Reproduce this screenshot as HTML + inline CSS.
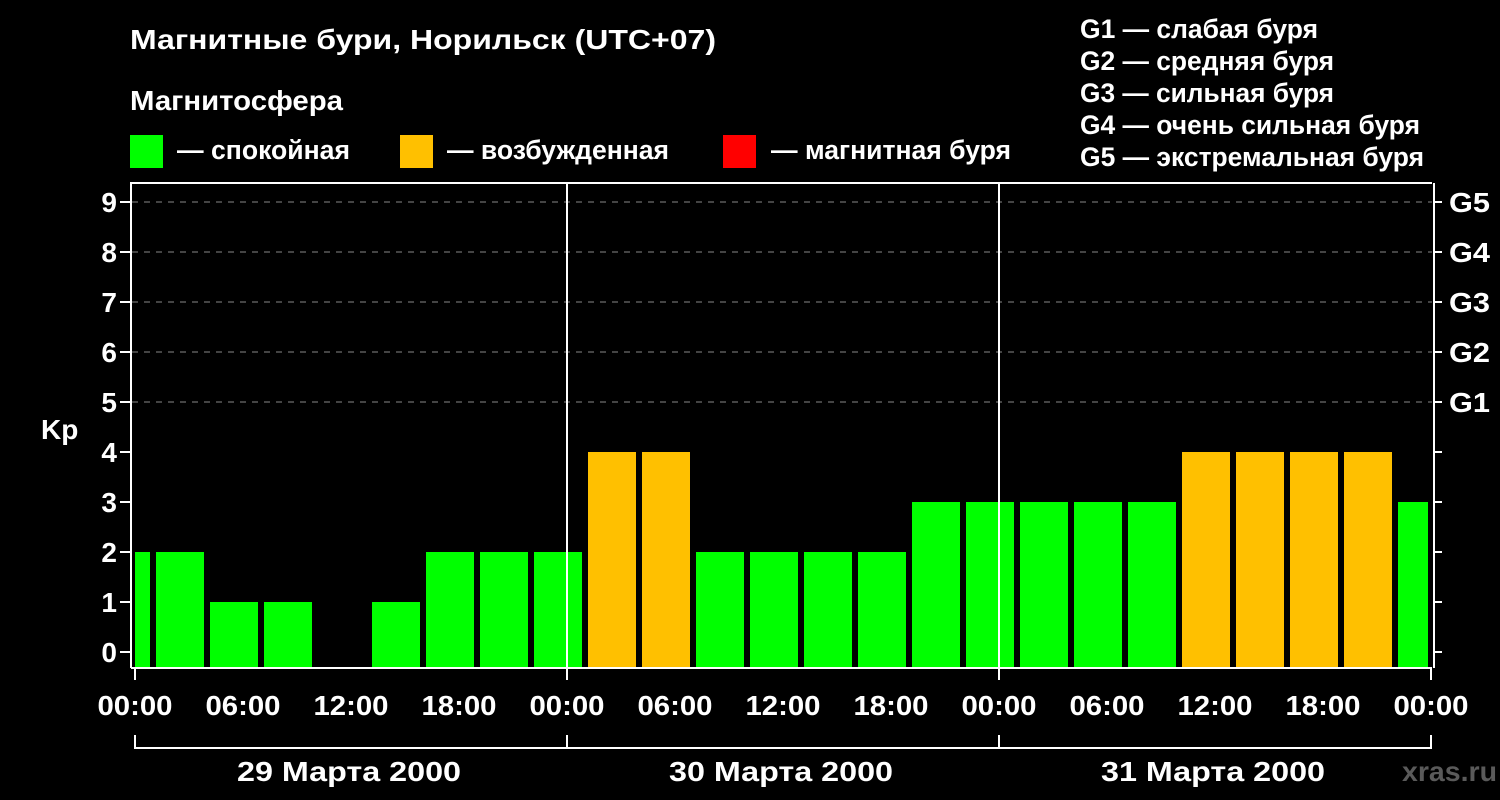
<!DOCTYPE html>
<html><head><meta charset="utf-8"><style>body{margin:0;background:#000}svg{display:block}text{font-family:"Liberation Sans",sans-serif;font-weight:bold;fill:#fff}</style></head><body>
<svg width="1500" height="800" xmlns="http://www.w3.org/2000/svg">
<rect width="1500" height="800" fill="#000"/>
<g font-size="28">
<text x="130" y="49" textLength="586" lengthAdjust="spacingAndGlyphs">Магнитные бури, Норильск (UTC+07)</text>
<text x="130" y="110" textLength="213" lengthAdjust="spacingAndGlyphs">Магнитосфера</text>
</g>
<rect x="130" y="135" width="33" height="33" fill="#00ff00"/>
<rect x="400" y="135" width="33" height="33" fill="#ffc000"/>
<rect x="723" y="135" width="33" height="33" fill="#ff0000"/>
<g font-size="27">
<text x="177" y="159" textLength="173" lengthAdjust="spacingAndGlyphs">— спокойная</text>
<text x="447" y="159" textLength="222" lengthAdjust="spacingAndGlyphs">— возбужденная</text>
<text x="771" y="159" textLength="240" lengthAdjust="spacingAndGlyphs">— магнитная буря</text>
<text x="1080" y="38" textLength="238" lengthAdjust="spacingAndGlyphs">G1 — слабая буря</text>
<text x="1080" y="70" textLength="254" lengthAdjust="spacingAndGlyphs">G2 — средняя буря</text>
<text x="1080" y="102" textLength="254" lengthAdjust="spacingAndGlyphs">G3 — сильная буря</text>
<text x="1080" y="134" textLength="340" lengthAdjust="spacingAndGlyphs">G4 — очень сильная буря</text>
<text x="1080" y="166" textLength="344" lengthAdjust="spacingAndGlyphs">G5 — экстремальная буря</text>
</g>
<g stroke="#888" stroke-width="1" stroke-dasharray="6,6">
<line x1="132" y1="202" x2="1432" y2="202"/><line x1="132" y1="252" x2="1432" y2="252"/><line x1="132" y1="302" x2="1432" y2="302"/><line x1="132" y1="352" x2="1432" y2="352"/><line x1="132" y1="402" x2="1432" y2="402"/>
</g>
<g>
<rect x="135" y="552" width="15" height="116" fill="#00ff00"/>
<rect x="156" y="552" width="48" height="116" fill="#00ff00"/>
<rect x="210" y="602" width="48" height="66" fill="#00ff00"/>
<rect x="264" y="602" width="48" height="66" fill="#00ff00"/>
<rect x="372" y="602" width="48" height="66" fill="#00ff00"/>
<rect x="426" y="552" width="48" height="116" fill="#00ff00"/>
<rect x="480" y="552" width="48" height="116" fill="#00ff00"/>
<rect x="534" y="552" width="48" height="116" fill="#00ff00"/>
<rect x="588" y="452" width="48" height="216" fill="#ffc000"/>
<rect x="642" y="452" width="48" height="216" fill="#ffc000"/>
<rect x="696" y="552" width="48" height="116" fill="#00ff00"/>
<rect x="750" y="552" width="48" height="116" fill="#00ff00"/>
<rect x="804" y="552" width="48" height="116" fill="#00ff00"/>
<rect x="858" y="552" width="48" height="116" fill="#00ff00"/>
<rect x="912" y="502" width="48" height="166" fill="#00ff00"/>
<rect x="966" y="502" width="48" height="166" fill="#00ff00"/>
<rect x="1020" y="502" width="48" height="166" fill="#00ff00"/>
<rect x="1074" y="502" width="48" height="166" fill="#00ff00"/>
<rect x="1128" y="502" width="48" height="166" fill="#00ff00"/>
<rect x="1182" y="452" width="48" height="216" fill="#ffc000"/>
<rect x="1236" y="452" width="48" height="216" fill="#ffc000"/>
<rect x="1290" y="452" width="48" height="216" fill="#ffc000"/>
<rect x="1344" y="452" width="48" height="216" fill="#ffc000"/>
<rect x="1398" y="502" width="30" height="166" fill="#00ff00"/>
</g>
<g stroke="#fff" stroke-width="2" fill="none">
<path d="M131 668 V183 H1432 M131 668 H1431 V680"/>
<line x1="1434" y1="183" x2="1434" y2="668"/>
<line x1="567" y1="183" x2="567" y2="680"/>
<line x1="999" y1="183" x2="999" y2="680"/>
<line x1="135" y1="668" x2="135" y2="680"/>
<path d="M135 735 V748 H1431 V735 M567 735 V748 M999 735 V748"/>
<path d="M120 202H131M120 252H131M120 302H131M120 352H131M120 402H131M120 452H131M120 502H131M120 552H131M120 602H131M120 652H131"/>
<path d="M1434 202H1442M1434 252H1442M1434 302H1442M1434 352H1442M1434 402H1442M1434 452H1442M1434 502H1442M1434 552H1442M1434 602H1442M1434 652H1442"/>
</g>
<g font-size="28" text-anchor="end">
<text x="117" y="212">9</text><text x="117" y="262">8</text><text x="117" y="312">7</text><text x="117" y="362">6</text><text x="117" y="412">5</text><text x="117" y="462">4</text><text x="117" y="512">3</text><text x="117" y="562">2</text><text x="117" y="612">1</text><text x="117" y="662">0</text>
</g>
<g font-size="28">
<text x="1449" y="212" textLength="41" lengthAdjust="spacingAndGlyphs">G5</text><text x="1449" y="262" textLength="41" lengthAdjust="spacingAndGlyphs">G4</text><text x="1449" y="312" textLength="41" lengthAdjust="spacingAndGlyphs">G3</text><text x="1449" y="362" textLength="41" lengthAdjust="spacingAndGlyphs">G2</text><text x="1449" y="412" textLength="41" lengthAdjust="spacingAndGlyphs">G1</text>
</g>
<text x="41" y="439" font-size="28">Kp</text>
<g font-size="28" text-anchor="middle">
<text x="135" y="715" textLength="75" lengthAdjust="spacingAndGlyphs">00:00</text><text x="243" y="715" textLength="75" lengthAdjust="spacingAndGlyphs">06:00</text><text x="351" y="715" textLength="75" lengthAdjust="spacingAndGlyphs">12:00</text><text x="459" y="715" textLength="75" lengthAdjust="spacingAndGlyphs">18:00</text>
<text x="567" y="715" textLength="75" lengthAdjust="spacingAndGlyphs">00:00</text><text x="675" y="715" textLength="75" lengthAdjust="spacingAndGlyphs">06:00</text><text x="783" y="715" textLength="75" lengthAdjust="spacingAndGlyphs">12:00</text><text x="891" y="715" textLength="75" lengthAdjust="spacingAndGlyphs">18:00</text>
<text x="999" y="715" textLength="75" lengthAdjust="spacingAndGlyphs">00:00</text><text x="1107" y="715" textLength="75" lengthAdjust="spacingAndGlyphs">06:00</text><text x="1215" y="715" textLength="75" lengthAdjust="spacingAndGlyphs">12:00</text><text x="1323" y="715" textLength="75" lengthAdjust="spacingAndGlyphs">18:00</text>
<text x="1431" y="715" textLength="75" lengthAdjust="spacingAndGlyphs">00:00</text>
<text x="349" y="781" textLength="224" lengthAdjust="spacingAndGlyphs">29 Марта 2000</text><text x="781" y="781" textLength="224" lengthAdjust="spacingAndGlyphs">30 Марта 2000</text><text x="1213" y="781" textLength="224" lengthAdjust="spacingAndGlyphs">31 Марта 2000</text>
</g>
<text x="1402" y="781" font-size="28" textLength="95" lengthAdjust="spacingAndGlyphs" style="fill:#5a5a5a">xras.ru</text>
</svg>
</body></html>
